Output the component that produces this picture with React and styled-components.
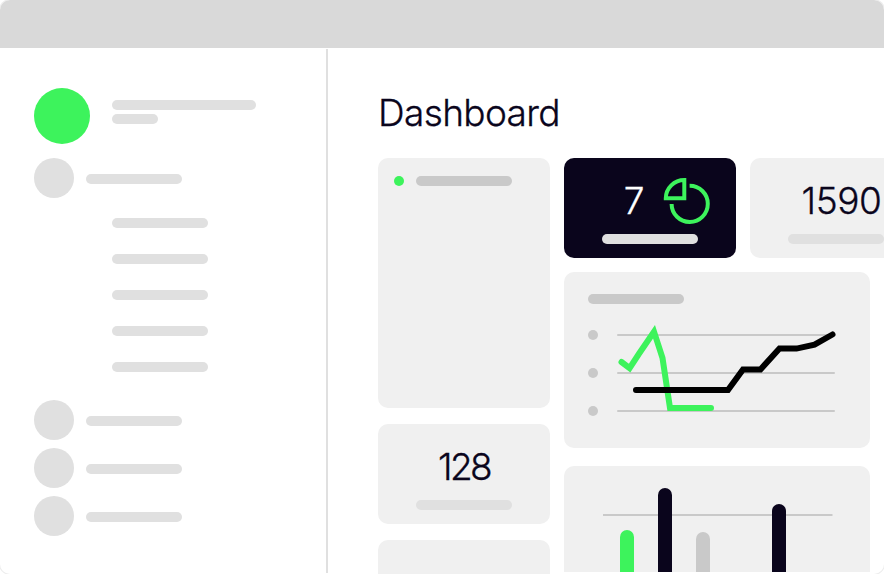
import React from "react";
import styled, { createGlobalStyle } from "styled-components";

const INK = "#0a051c";
const GREEN = "#3df35c";
const MID = "#c9c9c9";
const SOFT = "#e0e0e0";

const GlobalStyle = createGlobalStyle`
  * { box-sizing: border-box; }
  body { margin: 0; background: #fff; overflow: hidden; }
`;

const Window = styled.div`
  width: 884px;
  height: 574px;
  display: flex;
  flex-direction: column;
  overflow: hidden;
  border-radius: 10px;
  box-shadow: 0 0 0 1px rgba(0, 0, 0, 0.07);
  background: #fff;
  color: ${INK};
  font-family: Inter, "Open Sans", sans-serif;
  font-weight: 300;
  -webkit-text-stroke: 0.3px currentColor;
`;

const TitleBar = styled.header`
  flex: 0 0 48px;
  background: #d9d9d9;
`;

const Body = styled.div`
  flex: 1;
  min-height: 0;
  display: flex;
`;

const Sidebar = styled.nav`
  flex: 0 0 328px;
  margin: 1px 0;
  padding: 39px 0 0 34px;
  border-right: 2px solid ${SOFT};
`;

const Bar = styled.div`
  width: ${(p) => p.$width || 96}px;
  height: 10px;
  border-radius: 5px;
  background: ${(p) => p.$color || SOFT};
`;

const Circle = styled.div`
  flex: none;
  width: ${(p) => p.$size}px;
  height: ${(p) => p.$size}px;
  border-radius: 50%;
  background: ${(p) => p.$color || SOFT};
`;

const Profile = styled.div`
  display: flex;
  gap: 22px;
  margin-bottom: 14px;
`;

const ProfileText = styled.div`
  display: flex;
  flex-direction: column;
  gap: 4px;
  padding-top: 12px;
`;

const NavItem = styled.div`
  display: flex;
  align-items: flex-start;
  gap: 12px;
  margin-bottom: 8px;

  & > ${Bar} { margin-top: 16px; }
`;

const SubMenu = styled.div`
  display: flex;
  flex-direction: column;
  gap: 26px;
  padding: 12px 0 28px 78px;
`;

const Main = styled.main`
  flex: 1;
  min-width: 0;
  padding: 40px 0 0 50px;
`;

const Title = styled.h1`
  margin: 0 0 20px;
  height: 50px;
  font-size: 37px;
  line-height: 50px;
  font-weight: inherit;
  letter-spacing: -0.63px;
  white-space: nowrap;
`;

const Columns = styled.div`
  display: flex;
  align-items: flex-start;
  gap: 14px;
`;

const SideColumn = styled.div`
  flex: 0 0 172px;
  display: flex;
  flex-direction: column;
  gap: 16px;
`;

const WideColumn = styled.div`
  flex: none;
  display: flex;
  flex-direction: column;
`;

const StatRow = styled.div`
  display: flex;
  gap: 14px;
  width: 306px;
  margin-bottom: 14px;
`;

const Card = styled.section`
  flex: none;
  width: ${(p) => p.$width || 172}px;
  height: ${(p) => p.$height}px;
  border-radius: 10px;
  background: #f0f0f0;
`;

const StatusLine = styled.div`
  display: flex;
  align-items: center;
  gap: 12px;
  padding: 18px 16px;
`;

const StatCard = styled(Card)`
  height: 100px;
  display: flex;
  flex-direction: column;
  align-items: center;
  padding-top: 18px;
  background: ${(p) => (p.$dark ? INK : "#f0f0f0")};
  color: ${(p) => (p.$dark ? "#fff" : INK)};
`;

const StatValue = styled.div`
  height: 50px;
  margin-bottom: 8px;
  display: flex;
  align-items: center;
  gap: 20px;
  padding-left: ${(p) => p.$shift || 0}px;
  font-size: 37px;
  line-height: 50px;
  letter-spacing: ${(p) => p.$tracking || 0}px;
`;

const ChartCard = styled(Card)`
  padding: 22px 24px 0;
  margin-bottom: 18px;
`;

const ChartBody = styled.div`
  display: flex;
  gap: 18px;
  padding-top: 4px;
`;

const Legend = styled.div`
  display: flex;
  flex-direction: column;
  gap: 28px;
  padding-top: 22px;
`;

const Drawing = styled.svg`
  display: block;
  flex: none;
  overflow: visible;
`;

const Pie = () => (
  <Drawing width="48" height="48" viewBox="0.4 -1 48 48" fill="none" stroke={GREEN} strokeWidth="4">
    <path d="M20.7 2V20.3H2.2C2.2 10.2 10.6 2 20.7 2Z" />
    <path d="M26 7.8A18.1 18.1 0 1 1 8 26" />
  </Drawing>
);

const Stat = ({ value, dark, icon, shift, tracking }) => (
  <StatCard $dark={dark}>
    <StatValue $shift={shift} $tracking={tracking}>
      {value}
      {icon}
    </StatValue>
    <Bar />
  </StatCard>
);

const LineChart = () => (
  <Drawing width="220" height="110" viewBox="0 0 220 110" fill="none">
    <path d="M2 27H218M2 65H218M2 103H218" stroke={MID} strokeWidth="2" strokeLinecap="round" />
    <g strokeWidth="6" strokeLinecap="round">
      <path d="M5.5 54L13.6 60.2L22.8 46L38 23.7L46.5 50L54 100H95" stroke={GREEN} />
      <path d="M20 82H112L127 61.4H144.5L163.5 40.6H180.5L198.5 36.6L216.5 26.5" stroke="#000" />
    </g>
  </Drawing>
);

const BarChart = () => (
  <Drawing width="306" height="106" viewBox="0 0 306 106">
    <path d="M39 49H268.5" stroke={MID} strokeWidth="2" />
    <path d="M56 106V71a7 7 0 0 1 14 0V106Z" fill={GREEN} />
    <path d="M94 106V29a7 7 0 0 1 14 0V106Z" fill={INK} />
    <path d="M132 106V73a7 7 0 0 1 14 0V106Z" fill={MID} />
    <path d="M208 106V45a7 7 0 0 1 14 0V106Z" fill={INK} />
  </Drawing>
);

const BarCard = styled(Card)`
  border-radius: 10px 10px 0 0;
`;

export default function App() {
  return (
    <>
      <GlobalStyle />
      <Window>
        <TitleBar />
        <Body>
          <Sidebar>
            <Profile>
              <Circle $size={56} $color={GREEN} />
              <ProfileText>
                <Bar $width={144} />
                <Bar $width={46} />
              </ProfileText>
            </Profile>
            <NavItem>
              <Circle $size={40} />
              <Bar />
            </NavItem>
            <SubMenu>
              {[0, 1, 2, 3, 4].map((i) => (
                <Bar key={i} />
              ))}
            </SubMenu>
            {[0, 1, 2].map((i) => (
              <NavItem key={i}>
                <Circle $size={40} />
                <Bar />
              </NavItem>
            ))}
          </Sidebar>
          <Main>
            <Title>Dashboard</Title>
            <Columns>
              <SideColumn>
                <Card $height={250}>
                  <StatusLine>
                    <Circle $size={10} $color={GREEN} />
                    <Bar $color={MID} />
                  </StatusLine>
                </Card>
                <Stat value="128" tracking={-2.6} />
                <Card $height={100} />
              </SideColumn>
              <WideColumn>
                <StatRow>
                  <Stat value="7" dark icon={<Pie />} shift={36} />
                  <Stat value="1590" tracking={-0.4} shift={11} />
                </StatRow>
                <ChartCard $width={306} $height={176}>
                  <Bar $color={MID} />
                  <ChartBody>
                    <Legend>
                      <Circle $size={10} $color={MID} />
                      <Circle $size={10} $color={MID} />
                      <Circle $size={10} $color={MID} />
                    </Legend>
                    <LineChart />
                  </ChartBody>
                </ChartCard>
                <BarCard $width={306} $height={106}>
                  <BarChart />
                </BarCard>
              </WideColumn>
            </Columns>
          </Main>
        </Body>
      </Window>
    </>
  );
}
